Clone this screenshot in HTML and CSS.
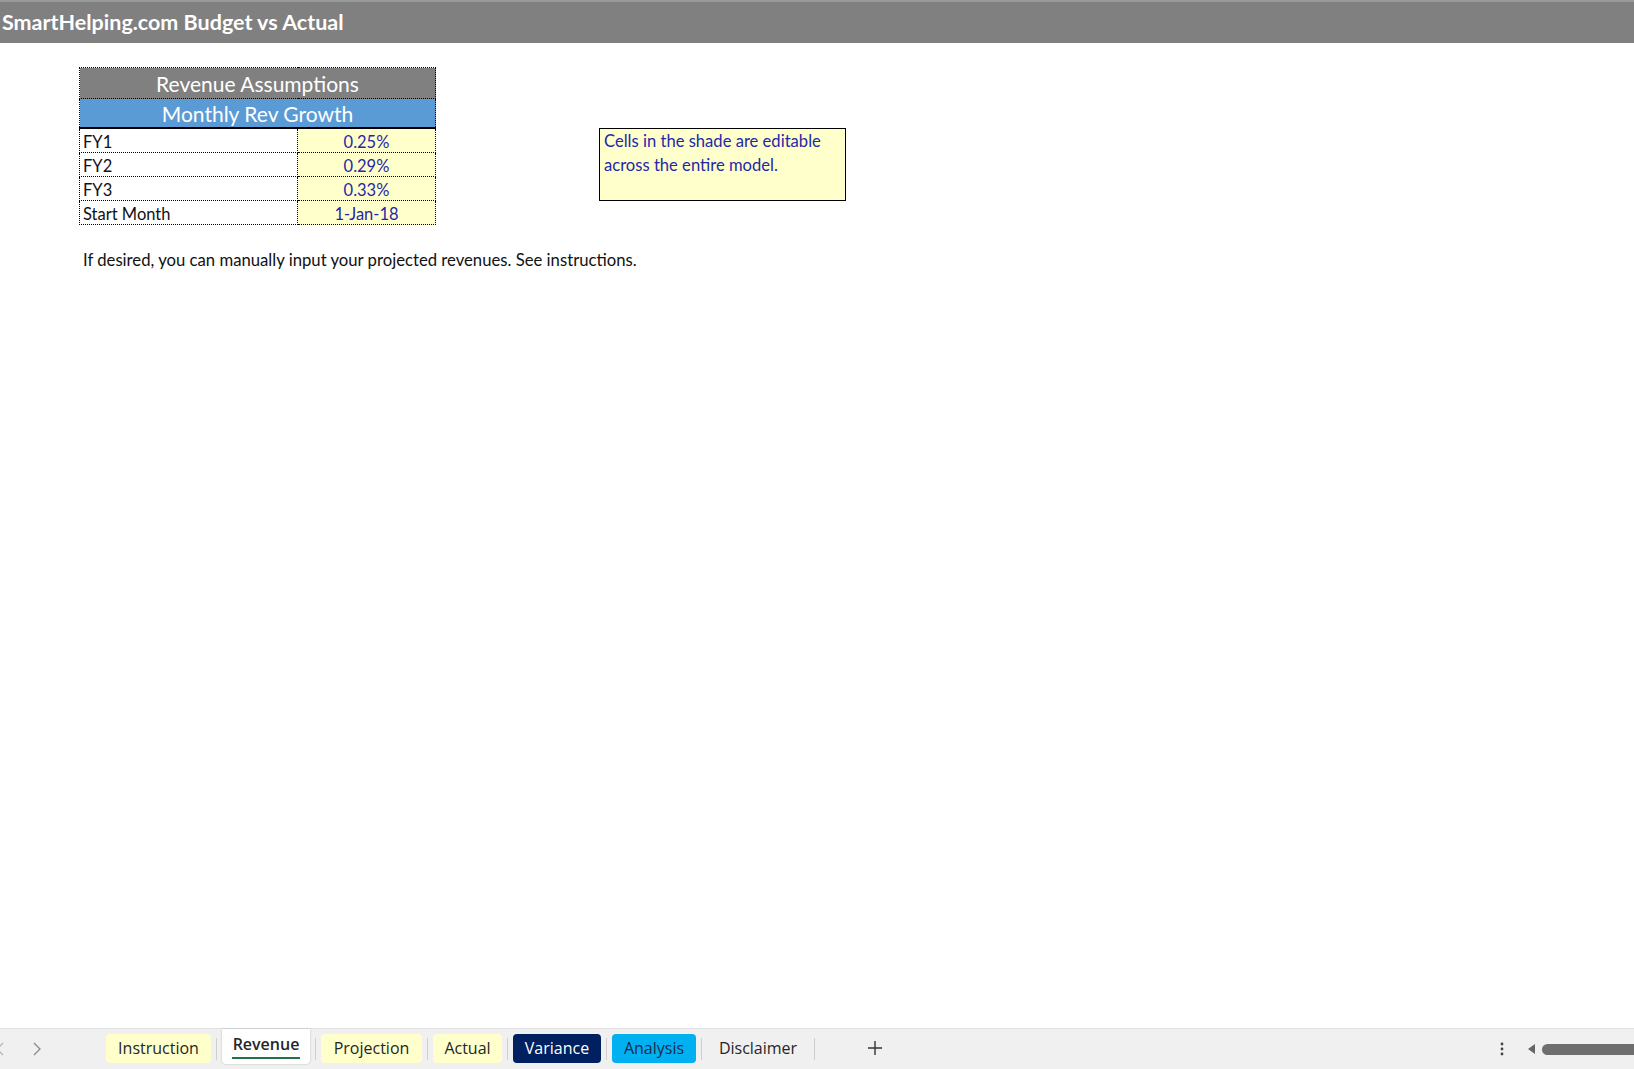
FILE: index.html
```html
<!DOCTYPE html>
<html lang="en">
<head>
    <meta charset="UTF-8">
    <meta name="viewport" content="width=device-width, initial-scale=1.0">
    <title>Budget vs Actual - Revenue</title>
    <link rel="stylesheet" href="styles.css">
</head>
<body>
    <header class="title-bar">SmartHelping.com Budget vs Actual</header>

    <main class="sheet">
        <div class="top-row">
            <!-- Revenue assumptions block -->
            <table class="assumptions">
                <tr><th colspan="2" class="head-gray">Revenue Assumptions</th></tr>
                <tr><th colspan="2" class="head-blue">Monthly Rev Growth</th></tr>
                <tr class="first"><td class="label">FY1</td><td class="input">0.25%</td></tr>
                <tr><td class="label">FY2</td><td class="input">0.29%</td></tr>
                <tr><td class="label">FY3</td><td class="input">0.33%</td></tr>
                <tr><td class="label">Start Month</td><td class="input">1-Jan-18</td></tr>
            </table>

            <!-- Note -->
            <div class="note">Cells in the shade are editable across the entire model.</div>
        </div>

        <p class="hint">If desired, you can manually input your projected revenues. See instructions.</p>
    </main>

    <footer class="tab-bar">
        <div class="nav-arrows">
            <svg class="arrow prev" width="8" height="14" viewBox="0 0 8 14"><path d="M7 1 L1 7 L7 13" fill="none" stroke="#b8b8b8" stroke-width="1.3"/></svg>
            <svg class="arrow next" width="8" height="14" viewBox="0 0 8 14"><path d="M1 1 L7 7 L1 13" fill="none" stroke="#8a8a8a" stroke-width="1.3"/></svg>
        </div>
        <div class="tabs">
            <span class="tab yellow t-instruction">Instruction</span>
            <span class="sep"></span>
            <span class="tab active t-revenue">Revenue</span>
            <span class="sep"></span>
            <span class="tab yellow t-projection">Projection</span>
            <span class="sep"></span>
            <span class="tab yellow t-actual">Actual</span>
            <span class="sep"></span>
            <span class="tab navy t-variance">Variance</span>
            <span class="sep"></span>
            <span class="tab cyan t-analysis">Analysis</span>
            <span class="sep"></span>
            <span class="tab plain t-disclaimer">Disclaimer</span>
            <span class="sep"></span>
            <span class="add-sheet">
                <svg width="16" height="16" viewBox="0 0 16 16"><path d="M8 1 V15 M1 8 H15" stroke="#333" stroke-width="1.4"/></svg>
            </span>
        </div>
        <div class="bar-right">
            <svg class="more" width="4" height="14" viewBox="0 0 4 14"><circle cx="2" cy="2" r="1.4" fill="#444"/><circle cx="2" cy="7" r="1.4" fill="#444"/><circle cx="2" cy="12" r="1.4" fill="#444"/></svg>
            <span class="scroll-back">
                <svg width="8" height="10" viewBox="0 0 8 10"><path d="M7 0 L0 5 L7 10 Z" fill="#666"/></svg>
            </span>
            <span class="scroll-thumb"></span>
        </div>
    </footer>
</body>
</html>
```

FILE: styles.css
```css
html, body {
    margin: 0;
    height: 100%;
}
body {
    display: flex;
    flex-direction: column;
    background: #fff;
    font-family: Lato, "Open Sans", sans-serif;
    color: #111;
    overflow: hidden;
}
.title-bar {
    height: 41px;
    border-top: 2px solid #9a9a9a;
    background: #808080;
    color: #fff;
    font-weight: bold;
    font-size: 21.5px;
    line-height: 40px;
    padding-left: 2px;
    white-space: nowrap;
}
.sheet {
    flex: 1;
    padding: 24px 0 0 79px;
}
.top-row {
    display: flex;
    align-items: flex-start;
}
.assumptions {
    border-collapse: collapse;
    border: 1px dotted #000;
    width: 357px;
}
.assumptions th {
    color: #fff;
    font-weight: normal;
    font-size: 21px;
    text-align: center;
    padding: 0;
    border: 1px dotted #000;
}
.head-gray {
    background: #808080;
    height: 30px;
}
.head-blue {
    background: #5b9bd5;
    height: 28px;
    border-bottom: 2px solid #000 !important;
}
.assumptions td {
    border: 1px dotted #000;
    font-size: 16.5px;
    height: 23px;
    padding: 4px 3px 0;
    line-height: 19px;
    box-sizing: border-box;
}
.assumptions .label {
    width: 218px;
    color: #111;
}
.assumptions .input {
    background: #ffffcc;
    color: #1f28a8;
    text-align: center;
}
.note {
    margin: 61px 0 0 163px;
    width: 241px;
    height: 70px;
    border: 1px solid #000;
    background: #ffffcc;
    color: #1f28a8;
    font-size: 16.6px;
    line-height: 23.5px;
    padding: 1px 0 0 4px;
}
.hint {
    margin: 25px 0 0 4px;
    font-size: 16.7px;
    color: #111;
}
.tab-bar {
    height: 40px;
    border-top: 1px solid #e0e0e0;
    background: #f0f0f0;
    display: flex;
    align-items: stretch;
    font-family: "Open Sans", "Noto Sans", sans-serif;
    font-size: 16px;
    color: #262626;
}
.nav-arrows {
    width: 106px;
    display: flex;
    align-items: center;
    flex-shrink: 0;
}
.arrow.prev {
    margin-left: -4px;
}
.arrow.next {
    margin-left: 29px;
}
.tabs {
    display: flex;
    align-items: flex-start;
    gap: 5px;
}
.tab {
    display: flex;
    align-items: center;
    justify-content: center;
    height: 29px;
    border-radius: 4px;
    margin-top: 5px;
    box-sizing: border-box;
    white-space: nowrap;
    padding-bottom: 1px;
}
.sep {
    width: 1px;
    height: 22px;
    background: #cfcfcf;
    margin-top: 9px;
}
.yellow {
    background: #ffffcc;
}
.navy {
    background: #002060;
    color: #fff;
}
.cyan {
    background: #00b0f0;
    color: #1a2a4a;
}
.active {
    background: #fff;
    height: 35px;
    margin-top: 0;
    border-radius: 0 0 4px 4px;
    box-shadow: 0 0 2px rgba(0, 0, 0, 0.25);
    font-weight: 600;
    position: relative;
    padding-bottom: 6px;
}
.active::after {
    content: "";
    position: absolute;
    left: 10px;
    right: 10px;
    bottom: 5px;
    height: 2px;
    background: #217346;
}
.t-instruction { width: 105px; }
.t-revenue { width: 88px; }
.t-projection { width: 101px; }
.t-actual { width: 69px; }
.t-variance { width: 88px; }
.t-analysis { width: 84px; }
.t-disclaimer { width: 102px; }
.add-sheet {
    margin: 11px 0 0 47px;
    display: flex;
    align-items: center;
}
.bar-right {
    margin-left: auto;
    display: flex;
    align-items: center;
}
.more {
    margin-right: 24px;
}
.scroll-back {
    display: flex;
    align-items: center;
    margin-right: 6px;
}
.scroll-thumb {
    width: 92px;
    height: 11px;
    background: #6e6e6e;
    border-radius: 6px 0 0 6px;
}
```
